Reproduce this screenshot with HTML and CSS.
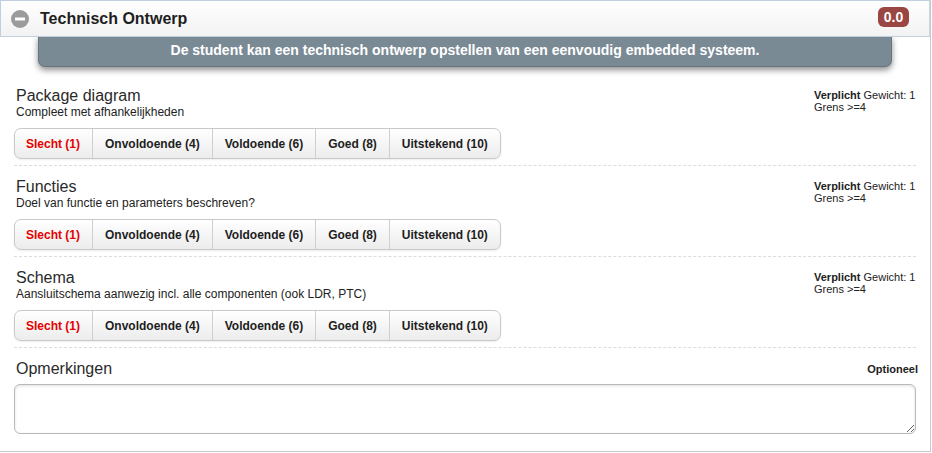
FILE: index.html
```html
<!DOCTYPE html>
<html lang="nl">
<head>
<meta charset="utf-8">
<title>Technisch Ontwerp</title>
<link rel="stylesheet" href="styles.css">
</head>
<body>
<div class="panel">
  <div class="panel-header">
    <span class="collapse-icon"><svg width="18" height="18" viewBox="0 0 18 18"><circle cx="9" cy="9" r="9" fill="#9b9b9b"/><rect x="4" y="7.5" width="10" height="3" rx="0.5" fill="#fff"/></svg></span>
    <span class="panel-title">Technisch Ontwerp</span>
    <span class="score-badge">0.0</span>
  </div>
  <div class="description">De student kan een technisch ontwerp opstellen van een eenvoudig embedded systeem.</div>
  <div class="panel-body">
    <div class="criterion">
      <div class="criterion-main">
        <div class="criterion-title">Package diagram</div>
        <div class="criterion-sub">Compleet met afhankelijkheden</div>
        <div class="btn-group">
          <button class="btn btn-active">Slecht (1)</button><button class="btn">Onvoldoende (4)</button><button class="btn">Voldoende (6)</button><button class="btn">Goed (8)</button><button class="btn">Uitstekend (10)</button>
        </div>
      </div>
      <div class="criterion-meta"><b>Verplicht</b> Gewicht: 1<br>Grens &gt;=4</div>
    </div>
    <div class="criterion">
      <div class="criterion-main">
        <div class="criterion-title">Functies</div>
        <div class="criterion-sub">Doel van functie en parameters beschreven?</div>
        <div class="btn-group">
          <button class="btn btn-active">Slecht (1)</button><button class="btn">Onvoldoende (4)</button><button class="btn">Voldoende (6)</button><button class="btn">Goed (8)</button><button class="btn">Uitstekend (10)</button>
        </div>
      </div>
      <div class="criterion-meta"><b>Verplicht</b> Gewicht: 1<br>Grens &gt;=4</div>
    </div>
    <div class="criterion">
      <div class="criterion-main">
        <div class="criterion-title">Schema</div>
        <div class="criterion-sub">Aansluitschema aanwezig incl. alle componenten (ook LDR, PTC)</div>
        <div class="btn-group">
          <button class="btn btn-active">Slecht (1)</button><button class="btn">Onvoldoende (4)</button><button class="btn">Voldoende (6)</button><button class="btn">Goed (8)</button><button class="btn">Uitstekend (10)</button>
        </div>
      </div>
      <div class="criterion-meta"><b>Verplicht</b> Gewicht: 1<br>Grens &gt;=4</div>
    </div>
    <div class="remarks">
      <div class="remarks-head">
        <span class="criterion-title">Opmerkingen</span>
        <span class="optional">Optioneel</span>
      </div>
      <textarea class="remarks-input"></textarea>
    </div>
  </div>
</div>
</body>
</html>
```

FILE: styles.css
```css
* { box-sizing: border-box; }
html, body { margin: 0; padding: 0; background: #fff; }
body {
  font-family: "Liberation Sans", Arial, Helvetica, sans-serif;
  color: #222;
  width: 932px;
  height: 453px;
  overflow: hidden;
}
.panel {
  width: 931px;
  border-right: 1px solid #c8c8c8;
  border-bottom: 1px solid #c8c8c8;
  background: #fff;
}
.panel-header {
  height: 37px;
  display: flex;
  align-items: center;
  padding: 0 20px 0 10px;
  border: 1px solid #bfcfde;
  border-right-color: #c9d6e3;
  background: linear-gradient(#ffffff, #f2f2f2);
  position: relative;
  z-index: 2;
}
.collapse-icon { width: 18px; height: 18px; display: flex; margin-top: 1px; }
.panel-title {
  margin-left: 11px;
  font-size: 16px;
  font-weight: bold;
  color: #1e1e1e;
  flex: 1;
}
.score-badge {
  background: #9a4642;
  color: #fff;
  font-weight: bold;
  font-size: 14px;
  line-height: 20px;
  height: 20px;
  width: 31px;
  text-align: center;
  border-radius: 6px;
  margin-top: -4px;
}
.description {
  margin: -1px 38px 0 38px;
  height: 31px;
  background: #7a8a95;
  border: 1px solid #67757f;
  border-top: none;
  border-radius: 0 0 7px 7px;
  box-shadow: 0 3px 6px rgba(0, 0, 0, 0.45);
  color: #fff;
  font-weight: bold;
  font-size: 14px;
  text-align: center;
  line-height: 29px;
  position: relative;
  z-index: 1;
}
.panel-body {
  padding: 8px 14px 17px 14px;
}
.criterion {
  display: flex;
  justify-content: space-between;
  padding: 12px 0 6px 0;
  border-bottom: 1px dashed #dcdcdc;
}
.criterion-main { display: flex; flex-direction: column; align-items: flex-start; }
.criterion-title {
  font-size: 16px;
  line-height: 18px;
  color: #2a2a2a;
  padding-left: 2px;
}
.criterion-sub {
  font-size: 12px;
  line-height: 15px;
  color: #222;
  padding-left: 2px;
}
.criterion-meta {
  font-size: 11px;
  line-height: 12px;
  padding-top: 2px;
  color: #222;
  width: 102px;
  white-space: nowrap;
}
.btn-group {
  margin-top: 8px;
  display: flex;
  height: 31px;
  border: 1px solid #c9c9c9;
  border-radius: 7px;
  background: linear-gradient(#ffffff, #ececec);
  box-shadow: 0 1px 2px rgba(0, 0, 0, 0.08);
  overflow: hidden;
}
.btn {
  font-family: "Liberation Sans", Arial, Helvetica, sans-serif;
  font-size: 12px;
  font-weight: bold;
  color: #1e1e1e;
  background: transparent;
  border: none;
  border-left: 1px solid #cfcfcf;
  padding: 0 12px 0 12px;
  margin: 0;
  height: 29px;
}
.btn:first-child { border-left: none; padding: 0 12px 0 11px; }
.btn-active { color: #e60000; }
.remarks { padding-top: 12px; }
.remarks-head {
  display: flex;
  justify-content: space-between;
  align-items: flex-start;
}
.optional {
  font-size: 11px;
  font-weight: bold;
  line-height: 12px;
  padding-top: 3px;
  margin-right: -2px;
}
.remarks-input {
  display: block;
  margin-top: 6px;
  width: 902px;
  height: 50px;
  border: 1px solid #b9b9b9;
  border-radius: 6px;
  box-shadow: inset 0 1px 3px rgba(0, 0, 0, 0.12);
  resize: both;
  font-family: "Liberation Sans", Arial, sans-serif;
}
```
